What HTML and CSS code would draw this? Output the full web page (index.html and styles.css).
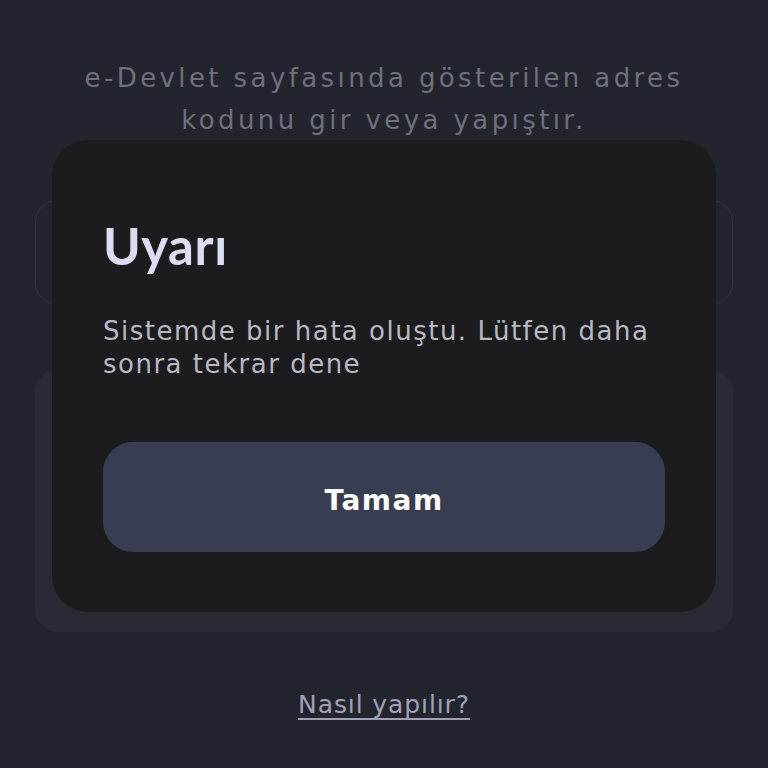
FILE: index.html
```html
<!DOCTYPE html>
<html lang="tr">
<head>
<meta charset="utf-8">
<link rel="stylesheet" href="styles.css">
</head>
<body>
<main class="page">
  <p class="intro">e-Devlet sayfasında gösterilen adres<br>kodunu gir veya yapıştır.</p>
  <div class="field"></div>
  <div class="card"></div>
  <a class="help" href="#">Nasıl yapılır?</a>
</main>
<div class="modal">
  <h1 class="modal-title">Uyarı</h1>
  <p class="modal-text">Sistemde bir hata oluştu. Lütfen daha sonra tekrar dene</p>
  <button class="modal-btn">Tamam</button>
</div>
</body>
</html>
```
FILE: styles.css
```css
html, body {
  margin: 0;
  padding: 0;
  background: #23252e;
  width: 768px;
  height: 768px;
  overflow: hidden;
  font-family: "DejaVu Sans", "Noto Sans", sans-serif;
}
.page {
  display: flex;
  flex-direction: column;
  align-items: center;
  padding: 57px 35px 0;
}
.intro {
  margin: 0;
  text-align: center;
  color: #6e707c;
  font-size: 26px;
  line-height: 42px;
  letter-spacing: 3.4px;
}
.field {
  align-self: stretch;
  box-sizing: border-box;
  margin-top: 59px;
  height: 105px;
  border: 1.5px solid #2f313b;
  border-radius: 22px;
}
.card {
  align-self: stretch;
  margin-top: 65px;
  height: 262px;
  background: #282a34;
  border-radius: 22px;
}
.help {
  margin-top: 58px;
  color: #a0a1b7;
  font-size: 25px;
  line-height: 30px;
  letter-spacing: 0.9px;
  text-decoration: underline;
  text-decoration-thickness: 2px;
  text-underline-offset: 5px;
}
.modal {
  position: absolute;
  left: 52px;
  top: 140px;
  width: 664px;
  height: 472px;
  box-sizing: border-box;
  padding: 76px 51px 0;
  background: #1c1c1e;
  border-radius: 36px;
  display: flex;
  flex-direction: column;
}
.modal-title {
  margin: 0;
  color: #dcdcf2;
  font-family: Lato, "DejaVu Sans", sans-serif;
  font-size: 51px;
  line-height: 60px;
  font-weight: 700;
  letter-spacing: 0.6px;
}
.modal-text {
  margin: 39px 0 0;
  color: #b8b9c4;
  font-size: 26px;
  line-height: 33px;
  letter-spacing: 1.5px;
}
.modal-btn {
  margin-top: 61px;
  height: 110px;
  padding: 6px 0 0;
  border: 0;
  border-radius: 30px;
  background: #393d51;
  color: #ffffff;
  font-family: "DejaVu Sans", sans-serif;
  font-size: 28px;
  font-weight: 700;
  letter-spacing: 1.5px;
}
```
